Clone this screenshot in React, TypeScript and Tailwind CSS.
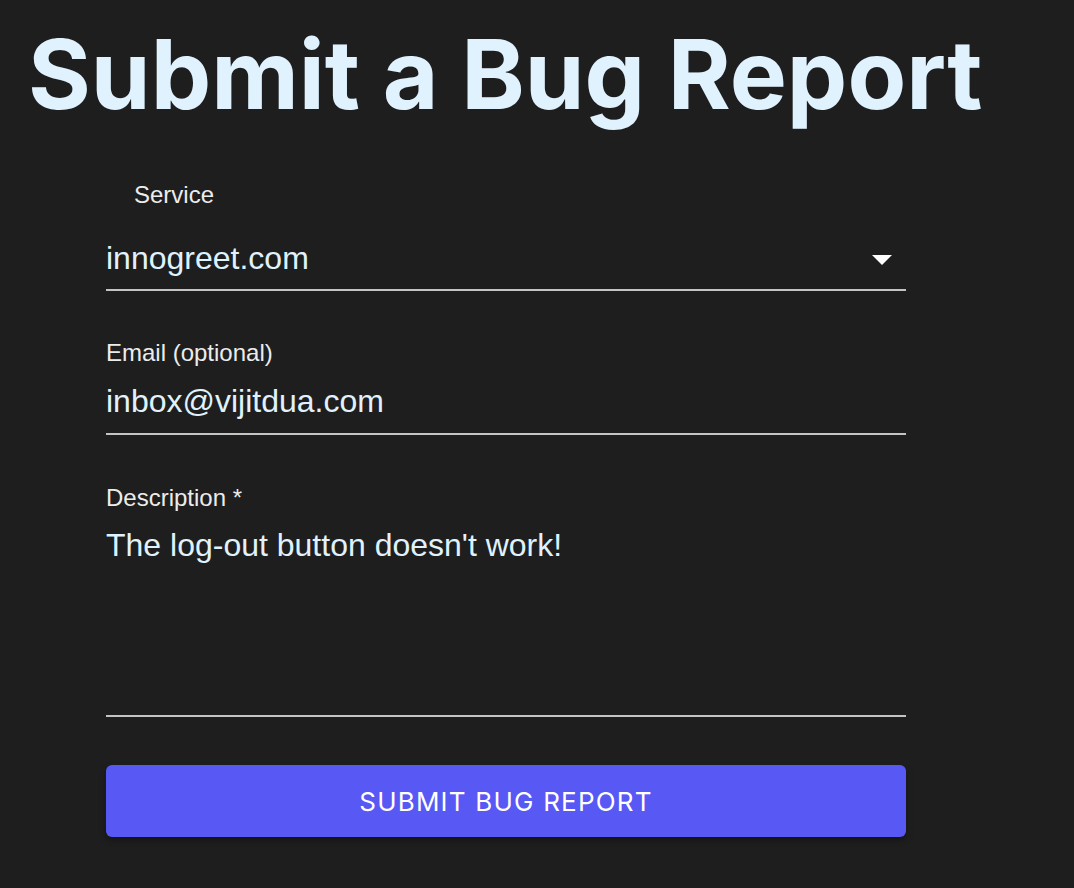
import React from 'react'

function Label({ children, className = '' }: { children: React.ReactNode; className?: string }) {
  return (
    <div className={`text-[24px] leading-[28px] text-[#ececec] ${className}`}>{children}</div>
  )
}

export default function App() {
  return (
    <div
      className="min-h-[888px] w-full bg-[#1e1e1e] px-6 pt-[26px]"
      style={{ fontFamily: '"Liberation Sans", Arial, sans-serif' }}
    >
      {/* Title */}
      <h1
        className="ml-1 text-[96px] leading-none font-bold text-[#e0f2fe]"
        style={{ fontFamily: 'Inter, "Noto Sans", sans-serif' }}
      >
        Submit a Bug Report
      </h1>

      {/* Form */}
      <form className="ml-[82px] w-[800px] mt-[59px] flex flex-col">
        {/* Service select */}
        <div className="flex flex-col">
          <Label className="pl-[28px]">Service</Label>
          <div className="mt-[31px] flex items-center justify-between border-b-2 border-[#c4c4c4] pb-[13px]">
            <span className="text-[32px] leading-[36px] text-[#e0f2fe]">innogreet.com</span>
            <svg width="20" height="10" viewBox="0 0 20 10" className="mr-[14px] mt-1">
              <path d="M0 0 L20 0 L10 10 Z" fill="#ffffff" />
            </svg>
          </div>
        </div>

        {/* Email */}
        <div className="mt-[48px] flex flex-col">
          <Label>Email (optional)</Label>
          <div className="mt-[16px] border-b-2 border-[#c4c4c4] pb-[14px]">
            <span className="text-[32px] leading-[36px] text-[#e0f2fe]">inbox@vijitdua.com</span>
          </div>
        </div>

        {/* Description */}
        <div className="mt-[49px] flex flex-col">
          <Label>Description *</Label>
          <div className="mt-[15px] h-[190px] border-b-2 border-[#c4c4c4]">
            <span className="text-[32px] leading-[36px] text-[#e0f2fe]">The log-out button doesn't work!</span>
          </div>
        </div>

        {/* Submit */}
        <button
          type="button"
          className="mt-[48px] h-[72px] w-full rounded-md bg-[#5858f5] text-[26px] tracking-[1.2px] text-white shadow-[0_3px_6px_rgba(0,0,0,0.35)]"
          style={{ fontFamily: 'Inter, "Noto Sans", sans-serif' }}
        >
          SUBMIT BUG REPORT
        </button>
      </form>
    </div>
  )
}
